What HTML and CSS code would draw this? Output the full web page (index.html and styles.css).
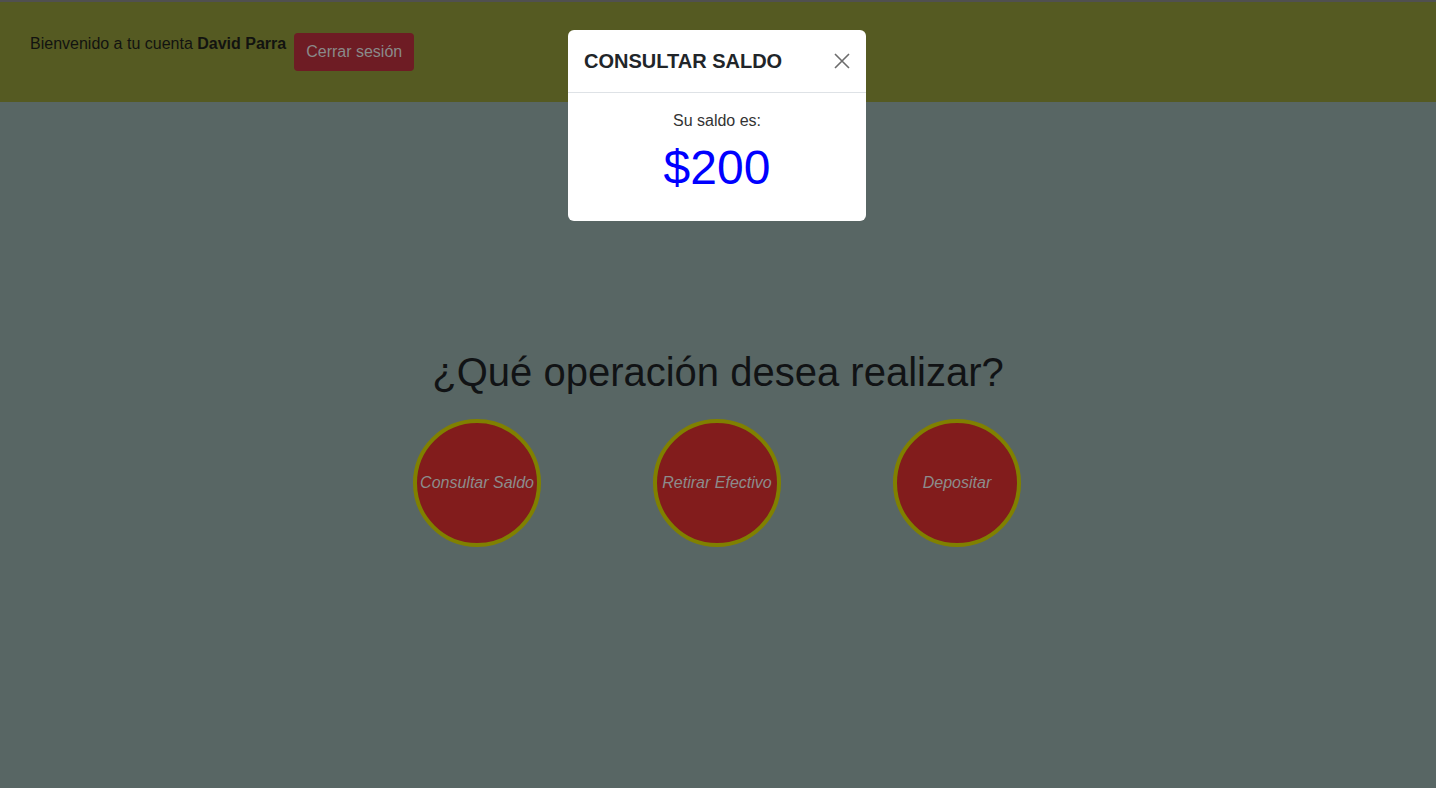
FILE: index.html
```html
<!DOCTYPE html>
<html lang="es">
<head>
<meta charset="utf-8">
<title>Cajero</title>
<link rel="stylesheet" href="styles.css">
</head>
<body>
<header class="topbar">
  <p class="welcome">Bienvenido a tu cuenta <strong>David Parra</strong></p>
  <button class="btn-logout">Cerrar sesión</button>
</header>
<main class="main">
  <h1 class="question">¿Qué operación desea realizar?</h1>
  <div class="ops">
    <div class="op">Consultar Saldo</div>
    <div class="op">Retirar Efectivo</div>
    <div class="op">Depositar</div>
  </div>
</main>
<div class="modal">
  <div class="modal-header">
    <h5 class="modal-title">CONSULTAR SALDO</h5>
    <svg class="close" width="16" height="16" viewBox="0 0 16 16"><path d="M1 1L15 15M15 1L1 15" stroke="#6c6c6c" stroke-width="1.6" fill="none"/></svg>
  </div>
  <div class="modal-body">
    <p class="label">Su saldo es:</p>
    <p class="amount">$200</p>
  </div>
</div>
</body>
</html>
```

FILE: styles.css
```css
html, body {
  margin: 0;
  padding: 0;
}
body {
  background: #586664;
  font-family: "Liberation Sans", Arial, sans-serif;
  font-size: 16px;
  line-height: 1.5;
  color: #111315;
  min-height: 788px;
}
.topbar {
  background: #555a22;
  border-top: 2px solid #505050;
  height: 102px;
  box-sizing: border-box;
  padding: 30px 0 0 30px;
  display: flex;
  align-items: flex-start;
  gap: 8px;
}
.welcome {
  margin: 0;
  color: #121310;
}
.btn-logout {
  margin-top: 1px;
  height: 38px;
  padding: 0 12px;
  border: none;
  border-radius: 4px;
  background: #6e1c24;
  color: #8a8a8a;
  font-family: "Liberation Sans", Arial, sans-serif;
  font-size: 16px;
}
.main {
  padding-top: 246px;
  display: flex;
  flex-direction: column;
  align-items: center;
}
.question {
  margin: 0 0 23px;
  font-size: 40px;
  font-weight: 400;
  line-height: 48px;
  color: #111315;
}
.ops {
  display: flex;
  gap: 112px;
  margin-left: -2px;
}
.op {
  width: 128px;
  height: 128px;
  box-sizing: border-box;
  border-radius: 50%;
  border: 4px solid #808000;
  background: #821c1c;
  color: #8c8c8c;
  font-style: italic;
  display: flex;
  align-items: center;
  justify-content: center;
  white-space: nowrap;
}
.modal {
  position: fixed;
  left: 568px;
  top: 30px;
  width: 298px;
  background: #fff;
  border-radius: 6px;
}
.modal-header {
  display: flex;
  align-items: center;
  justify-content: space-between;
  padding: 16px;
  border-bottom: 1px solid #dee2e6;
}
.modal-title {
  margin: 0;
  font-size: 20px;
  font-weight: 700;
  line-height: 30px;
  color: #212529;
}
.close {
  display: block;
}
.modal-body {
  padding: 16px 16px 16px;
  text-align: center;
}
.label {
  margin: 0;
  color: #333;
}
.amount {
  margin: 6px 0 8px;
  font-size: 48px;
  line-height: 1.2;
  color: #0000ff;
}
```
